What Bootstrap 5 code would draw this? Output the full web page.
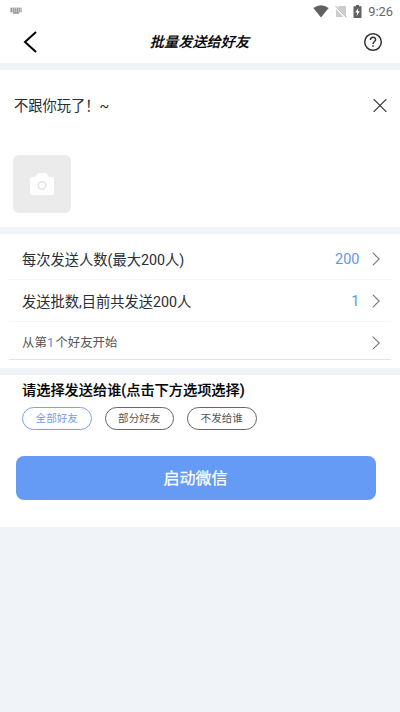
<!DOCTYPE html>
<html lang="zh-CN">
<head>
<meta charset="utf-8">
<meta name="viewport" content="width=device-width, initial-scale=1">
<title>批量发送给好友</title>
<link href="https://cdn.jsdelivr.net/npm/bootstrap@5.3.0/dist/css/bootstrap.min.css" rel="stylesheet">
<style>
body{background:#f0f4f8;font-family:Roboto,"Noto Sans CJK SC",sans-serif;font-size:14.25px;line-height:20px;color:#292d35;overflow:hidden}
svg{display:block;flex:none}
.status-bar{height:22px;font-size:12.8px;color:#666;padding:0 7px 0 9px}
.status-icons{gap:6px}
.status-icons span{padding-top:1px}
.title-bar{height:41px;padding:0 17px 2px 22px}
.page-title{font-size:14.2px;line-height:20px;font-style:italic;color:#000;padding-right:2px;-webkit-text-stroke:.15px #000}
.panel{margin-top:7px}
.compose{height:157px;padding:26px 13.5px 0 14px}
.photo-add{width:58px;height:58px;border-radius:6px;background:#ebebeb;margin:39px 0 0 -1px}
.settings{height:134px;margin-top:7px;padding:4px 9px 0}
.setting{height:42px;padding:0 11.5px 0 13px;border-bottom:1px solid #f5f6f8}
.setting-label{padding-top:2px}
.setting-last{height:38px;padding-top:4px;font-size:12.4px;color:#555;border-bottom:1px solid #e2e4e6}
.accent{color:#6495ed}
.inline-count{padding:0 1px 0 0;font-size:13.5px}
.value{font-size:14.5px;margin-right:12px;padding-top:2px}
.targets{height:152px;padding:5px 0 0}
.targets-title{font-size:14.2px;line-height:20px;color:#000;-webkit-text-stroke:.15px #000;margin-left:22px}
.pill-row{gap:13px;margin:7px 0 0 22px}
.btn.pill{width:69.5px;height:23px;padding:0;font-size:10.6px;line-height:22px;border:1px solid #666;color:#555}
.btn.pill.active{border-color:#79a2f0;color:#729cec;background:#fff}
.btn.launch{width:360px;height:44px;margin:26px 0 0 15.5px;border:0;border-radius:8px;background:#669bf5;color:#fff;font-size:16px;line-height:24px;-webkit-text-stroke:.25px #fff;padding:2px 0 0}
</style>
</head>
<body>
<header class="bg-white">
  <div class="status-bar d-flex align-items-center justify-content-between">
    <svg width="14" height="8" viewBox="0 0 14 8"><path d="M1 .5h12v5H10v1.200H4V5.500H1z" fill="#c4c4c4"/><path d="M2 2h10M2 4h10" stroke="#777" stroke-dasharray="1 1"/><path d="M4 6h6" stroke="#888"/></svg>
    <div class="status-icons d-flex align-items-center">
      <svg width="16" height="13" viewBox="0 0 16 13"><path d="M.3 3Q8-2.400 15.700 3L8 12.500z" fill="#616161"/></svg>
      <svg width="12" height="13" viewBox="0 0 12 13"><path d="M4 1h7v11H1V4z" fill="#ccc"/><path d="M0 1l11 12" stroke="#fff" stroke-width="2.500"/><path d="M.5 1l11 11.500" stroke="#aaa"/></svg>
      <svg width="9" height="13" viewBox="0 0 9 13"><path d="M3 0h3v1.300h2.500V13H.5V1.300H3z" fill="#616161"/><path d="M5.300 3L2.200 7.500h2L3.700 11l3.100-4.800h-2z" fill="#fff"/></svg>
      <span>9:26</span>
    </div>
  </div>
  <nav class="title-bar d-flex align-items-center justify-content-between">
    <svg width="16" height="22" viewBox="0 0 16 22"><path d="M14 1L3 11l11 10" fill="none" stroke="#000" stroke-width="2"/></svg>
    <h1 class="page-title mb-0">批量发送给好友</h1>
    <svg width="20" height="20" viewBox="0 0 20 20" fill="none" stroke="#333" stroke-width="1.500"><circle cx="10" cy="10" r="8.300"/><path d="M7.400 7.900C7.400 4.300 12.700 4.500 12.600 7.800C12.600 9.600 10 9.500 10 12"/><path d="M10 13.200v1.600"/></svg>
  </nav>
</header>
<main>
  <section class="panel compose bg-white">
    <div class="d-flex justify-content-between align-items-start">
      <span>不跟你玩了！~</span>
      <svg class="mt-0" width="14" height="19" viewBox="0 0 14 19"><path d="M.7 3.200l12.600 12.600M13.300 3.200L.7 15.800" stroke="#333" stroke-width="1.200"/></svg>
    </div>
    <div class="photo-add d-flex align-items-center justify-content-center">
      <svg width="24" height="22" viewBox="0 0 24 22"><path d="M2.500 4H5L7.500.8Q8 0 9 0h6q1 0 1.500.8L19 4h2.500Q24 4 24 6.500v13q0 2.500-2.500 2.500h-19Q0 22 0 19.500v-13Q0 4 2.500 4z" fill="#fff"/><circle cx="12" cy="12.500" r="3.800" fill="#fff" stroke="#e4e4e4" stroke-width="1.600"/></svg>
    </div>
  </section>
  <section class="settings bg-white">
    <div class="setting d-flex align-items-center">
      <span class="setting-label">每次发送人数(最大200人)</span><span class="value accent ms-auto">200</span>
      <svg width="8" height="14" viewBox="0 0 8 14"><path d="M.7.700L7.200 7 .7 13.300" fill="none" stroke="#777" stroke-width="1.100"/></svg>
    </div>
    <div class="setting d-flex align-items-center">
      <span class="setting-label">发送批数,目前共发送200人</span><span class="value accent ms-auto">1</span>
      <svg width="8" height="14" viewBox="0 0 8 14"><path d="M.7.700L7.200 7 .7 13.300" fill="none" stroke="#777" stroke-width="1.100"/></svg>
    </div>
    <div class="setting setting-last d-flex align-items-center">
      <span>从第<span class="accent inline-count">1</span>个好友开始</span>
      <svg class="ms-auto" width="8" height="14" viewBox="0 0 8 14"><path d="M.7.700L7.200 7 .7 13.300" fill="none" stroke="#777" stroke-width="1.100"/></svg>
    </div>
  </section>
  <section class="panel targets bg-white">
    <h2 class="targets-title mb-0">请选择发送给谁(点击下方选项选择)</h2>
    <div class="pill-row d-flex">
      <button class="btn pill rounded-pill active">全部好友</button>
      <button class="btn pill rounded-pill">部分好友</button>
      <button class="btn pill rounded-pill">不发给谁</button>
    </div>
    <button class="btn launch">启动微信</button>
  </section>
</main>
<script src="https://cdn.jsdelivr.net/npm/bootstrap@5.3.0/dist/js/bootstrap.bundle.min.js"></script>
</body>
</html>
